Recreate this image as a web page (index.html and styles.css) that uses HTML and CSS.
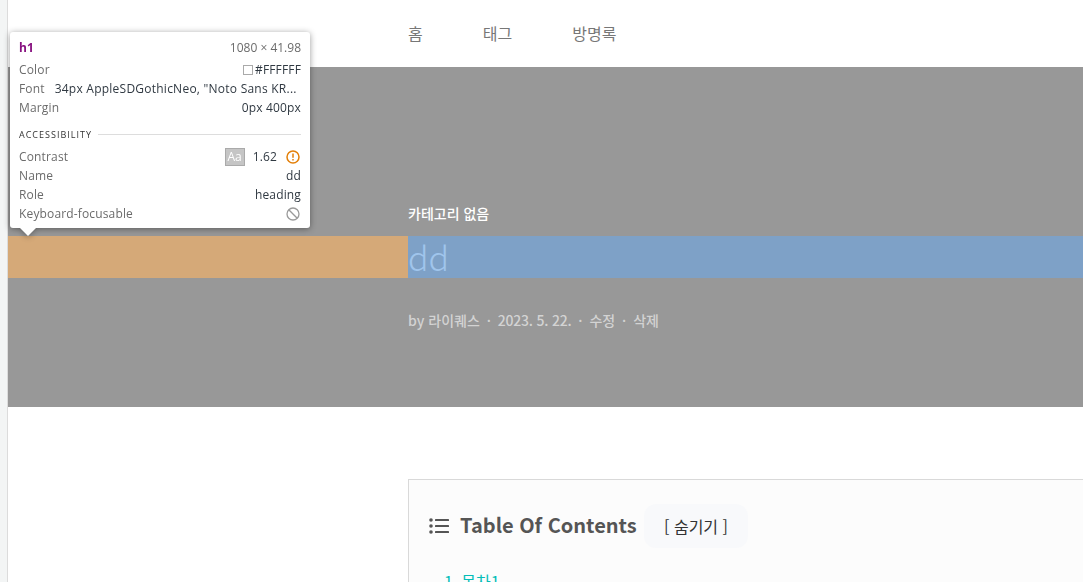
FILE: index.html
```
<!DOCTYPE html>
<html lang="ko">
<head>
    <meta charset="UTF-8">
    <meta name="viewport" content="width=device-width, initial-scale=1.0">
    <title>dd</title>
    <link rel="stylesheet" href="styles.css">
</head>
<body>
    <div class="gutter"></div>
    <div class="page">
        <nav class="menu">
            <a>홈</a>
            <a>태그</a>
            <a>방명록</a>
        </nav>
        <header class="cover">
            <p class="category">카테고리 없음</p>
            <div class="title-row">
                <h1>dd</h1>
            </div>
            <p class="meta">
                <span>by 라이퀘스</span><i>·</i><span class="date">2023. 5. 22.</span><i>·</i><span>수정</span><i>·</i><span>삭제</span>
            </p>
        </header>
        <main class="content">
            <div class="toc">
                <div class="toc-head">
                    <svg class="toc-icon" width="20" height="18" viewBox="0 0 20 18">
                        <g fill="#555">
                            <circle cx="2" cy="3" r="1.8"/>
                            <circle cx="2" cy="9" r="1.8"/>
                            <circle cx="2" cy="15" r="1.8"/>
                            <rect x="6" y="2" width="14" height="2" rx="0.6"/>
                            <rect x="6" y="8" width="14" height="2" rx="0.6"/>
                            <rect x="6" y="14" width="14" height="2" rx="0.6"/>
                        </g>
                    </svg>
                    <h2>Table Of Contents</h2>
                    <button class="toggle">[ 숨기기 ]</button>
                </div>
                <div class="toc-list"><span>1.</span><a>목차1</a></div>
            </div>
        </main>
    </div>

    <div class="tooltip">
        <div class="row first"><b>h1</b><span class="size">1080 × 41.98</span></div>
        <div class="row"><span>Color</span><span class="value"><i class="swatch"></i>#FFFFFF</span></div>
        <div class="row"><span>Font</span><span class="value font">34px AppleSDGothicNeo, "Noto Sans KR...</span></div>
        <div class="row"><span>Margin</span><span class="value">0px 400px</span></div>
        <div class="section">ACCESSIBILITY</div>
        <div class="row">
            <span>Contrast</span>
            <span class="value">
                <i class="sample">Aa</i>1.62
                <svg class="icon" width="14" height="14" viewBox="0 0 14 14" fill="none" stroke="#e37f08" stroke-width="1.5">
                    <circle cx="7" cy="7" r="6"/>
                    <path d="M7 3.4v4.4M7 9.1v1.5"/>
                </svg>
            </span>
        </div>
        <div class="row"><span>Name</span><span class="value">dd</span></div>
        <div class="row"><span>Role</span><span class="value">heading</span></div>
        <div class="row">
            <span>Keyboard-focusable</span>
            <svg class="icon" width="14" height="14" viewBox="0 0 14 14" fill="none" stroke="#9a9a9a" stroke-width="1.3">
                <circle cx="7" cy="7" r="6"/>
                <path d="M2.8 2.8l8.4 8.4"/>
            </svg>
        </div>
    </div>
</body>
</html>
```
FILE: styles.css
```
* {
    box-sizing: border-box;
}
body {
    display: flex;
    height: 582px;
    margin: 0;
    overflow: hidden;
    background: #fff;
    font-family: 'Noto Sans CJK KR', 'Noto Sans', sans-serif;
}
h1, h2, p {
    margin: 0;
}
i {
    font-style: normal;
}
.gutter {
    flex: 0 0 8px;
    background: #f3f5f5;
    border-right: 1px solid #dcdcdc;
}
.page {
    flex: 1;
    min-width: 0;
}
.menu {
    display: flex;
    gap: 60px;
    height: 67px;
    padding: 21px 0 0 400px;
    font-size: 16px;
    line-height: 24px;
    color: #777;
}
.cover {
    height: 340px;
    padding-top: 135px;
    background: #989898;
}
.category {
    height: 34px;
    padding-left: 400px;
    font-size: 14px;
    line-height: 22px;
    font-weight: 500;
    color: #fff;
}
/* inspector highlight: margin, then the content box */
.title-row {
    height: 42px;
    padding-left: 400px;
    background: #d5a978;
}
.title-row h1 {
    height: 42px;
    background: #7ea1c7;
    color: #a0c5ec;
    font-size: 34px;
    font-weight: 300;
    line-height: 42px;
}
.meta {
    display: flex;
    padding: 31px 0 0 400px;
    font-size: 14px;
    line-height: 22px;
    font-weight: 500;
    color: #d3d3d3;
}
.meta i {
    width: 18px;
    text-align: center;
}
.meta .date {
    letter-spacing: -0.22px;
}
.content {
    padding: 72px 0 0 400px;
}
.toc {
    height: 103px;
    padding: 24px 20px 0;
    background: #fcfcfc;
    border: 1px solid #d9d9d9;
    border-width: 1px 0 0 1px;
}
.toc-head {
    display: flex;
    align-items: center;
    height: 44px;
}
.toc-icon {
    margin-right: 11px;
}
.toc h2 {
    width: 176px;
    padding-bottom: 2px;
    font-size: 20px;
    font-weight: 700;
    line-height: 30px;
    white-space: nowrap;
    color: #555;
}
.toggle {
    width: 104px;
    height: 44px;
    margin-left: 8px;
    padding: 0 0 1px;
    border: 0;
    border-radius: 12px;
    background: #f8f9fb;
    color: #333;
    font-family: inherit;
    font-size: 16px;
}
.toc-list {
    display: flex;
    gap: 4px;
    padding: 21px 0 0 15px;
    font-size: 16px;
    line-height: 24px;
    color: #04beb8;
}
.tooltip {
    position: absolute;
    left: 10px;
    top: 32px;
    width: 300px;
    height: 196px;
    padding: 6px 9px 0;
    border-radius: 3px;
    background: #fff;
    font-family: 'Open Sans', 'Noto Sans', sans-serif;
    font-size: 12px;
    letter-spacing: 0.15px;
    color: #6b6b6b;
    filter: drop-shadow(0 1px 3px rgba(0, 0, 0, 0.4));
}
.tooltip::after {
    content: '';
    position: absolute;
    left: 10px;
    top: 196px;
    border: 8px solid transparent;
    border-top-color: #fff;
    border-bottom: 0;
}
.row {
    display: flex;
    align-items: center;
    justify-content: space-between;
    height: 19px;
}
.row.first {
    margin-bottom: 3px;
}
.row b {
    color: #881280;
}
.size {
    letter-spacing: 0;
}
.value {
    display: flex;
    align-items: center;
    color: #303942;
    white-space: nowrap;
}
.value.font {
    flex: 1;
    margin-left: 10px;
    letter-spacing: 0.24px;
}
.swatch {
    width: 10px;
    height: 10px;
    margin-right: 2px;
    border: 1px solid #aaa;
}
.section {
    display: flex;
    align-items: center;
    height: 19px;
    margin: 8px 0 3px;
    font-size: 9px;
    letter-spacing: 1px;
    color: #333;
}
.section::after {
    content: '';
    flex: 1;
    height: 1px;
    margin-left: 6px;
    background: #ddd;
}
.sample {
    width: 20px;
    height: 18px;
    margin-right: 8px;
    border: 1px solid #aaa;
    background: #c5c5c5;
    color: #fff;
    line-height: 16px;
    text-align: center;
}
.icon {
    margin-right: 1px;
}
.value .icon {
    margin-left: 9px;
}
```
